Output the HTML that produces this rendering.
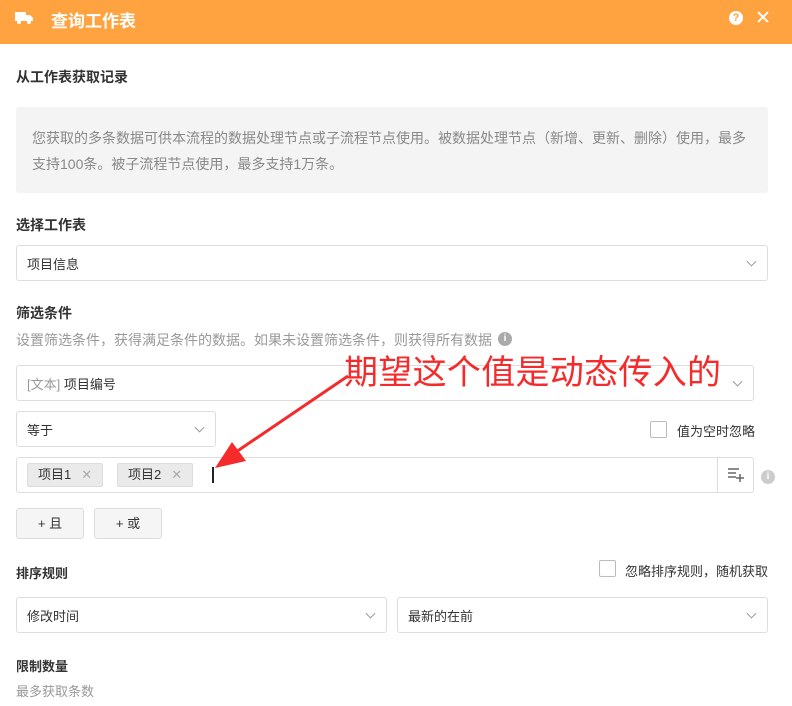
<!DOCTYPE html>
<html><head><meta charset="utf-8"><style>
*{box-sizing:border-box;margin:0;padding:0}
body{width:792px;height:706px;overflow:hidden;background:#fff;font-family:"Liberation Sans","Noto Sans CJK SC",sans-serif;color:#333;font-size:14px;position:relative}
.a{position:absolute;white-space:nowrap}
.hd{left:0;top:0;width:792px;height:44px;background:#ffa340}
.b{font-weight:bold;color:#333;font-size:14px}
.box{border:1px solid #ddd;border-radius:3px;background:#fff}
.chev{position:absolute;right:12px;top:50%;width:7px;height:7px;border-right:1px solid #999;border-bottom:1px solid #999;transform:translateY(-70%) rotate(45deg)}
.tag{background:#eaeaea;border:1px solid #ddd;border-radius:2px;height:24px;line-height:22px;padding:0 10px;font-size:13px;color:#333}
.tag span{color:#aaa;margin-left:10px}
.btn{border:1px solid #ddd;border-radius:3px;background:#f5f5f5;height:31px;line-height:29px;text-align:center;font-size:13px}
.cb{width:17px;height:17px;border:1px solid #bbb;border-radius:2px;background:#fff}
.g{color:#999}
</style></head><body>
<div class="a hd"></div>
<svg class="a" style="left:14px;top:10px" width="20" height="16" viewBox="0 0 20 16"><rect x="1" y="2" width="11" height="9" fill="#fff"/><path d="M12 5h4l3 3v3h-7z" fill="#fff"/><circle cx="5" cy="12" r="2" fill="#fff"/><circle cx="15" cy="12" r="2" fill="#fff"/></svg>
<div class="a" style="left:51px;top:7px;color:#fff;font-weight:bold;font-size:17px">查询工作表</div>
<div class="a" style="left:729px;top:11px;width:14px;height:14px;border-radius:50%;background:#fff;color:#ffa340;font-size:11px;font-weight:bold;text-align:center;line-height:14px">?</div>
<div class="a" style="left:755px;top:7px;color:#fff;font-size:19px">✕</div>

<div class="a b" style="left:16px;top:67px">从工作表获取记录</div>
<div class="a" style="left:16px;top:107px;width:752px;height:86px;background:#f4f4f4;border-radius:3px;padding:18px 12px 0 16px;color:#888;font-size:14px;line-height:26px;white-space:normal">您获取的多条数据可供本流程的数据处理节点或子流程节点使用。被数据处理节点（新增、更新、删除）使用，最多支持100条。被子流程节点使用，最多支持1万条。</div>

<div class="a b" style="left:16px;top:215px">选择工作表</div>
<div class="a box" style="left:16px;top:245px;width:752px;height:36px;padding:8px 10px;font-size:13px">项目信息<i class="chev"></i></div>

<div class="a b" style="left:16px;top:303px">筛选条件</div>
<div class="a g" style="left:16px;top:330px">设置筛选条件，获得满足条件的数据。如果未设置筛选条件，则获得所有数据</div>
<div class="a" style="left:498px;top:332px;width:14px;height:14px;border-radius:50%;background:#aaa;color:#fff;font-size:10px;text-align:center;line-height:14px;font-weight:bold">i</div>

<div class="a box" style="left:16px;top:365px;width:738px;height:36px;padding:8px 10px;font-size:13px"><span class="g">[文本]</span> 项目编号<i class="chev"></i></div>
<div class="a box" style="left:16px;top:411px;width:200px;height:36px;padding:8px 10px;font-size:13px">等于<i class="chev"></i></div>
<div class="a cb" style="left:650px;top:421px"></div>
<div class="a" style="left:677px;top:421px;font-size:13px">值为空时忽略</div>

<div class="a box" style="left:16px;top:457px;width:738px;height:36px"></div>
<div class="a" style="left:717px;top:458px;width:1px;height:34px;background:#ddd"></div>
<div class="a tag" style="left:27px;top:463px">项目1<span>✕</span></div>
<div class="a tag" style="left:117px;top:463px">项目2<span>✕</span></div>
<div class="a" style="left:212px;top:467px;width:2px;height:16px;background:#222"></div>
<svg class="a" style="left:727px;top:466px" width="17" height="16" viewBox="0 0 17 16"><path d="M1 3h11M1 7h8M1 11h8M13 8v8M9 12h8" stroke="#666" stroke-width="1.5" fill="none"/></svg>
<div class="a" style="left:761px;top:470px;width:14px;height:14px;border-radius:50%;background:#ccc;color:#fff;font-size:10px;text-align:center;line-height:14px;font-weight:bold">i</div>

<div class="a btn" style="left:16px;top:508px;width:68px">+ 且</div>
<div class="a btn" style="left:94px;top:508px;width:68px">+ 或</div>

<div class="a b" style="left:16px;top:563px;font-size:13px">排序规则</div>
<div class="a cb" style="left:599px;top:560px"></div>
<div class="a" style="left:625px;top:561px;font-size:13px">忽略排序规则，随机获取</div>
<div class="a box" style="left:16px;top:597px;width:371px;height:36px;padding:8px 10px;font-size:13px">修改时间<i class="chev"></i></div>
<div class="a box" style="left:397px;top:597px;width:371px;height:36px;padding:8px 10px;font-size:13px">最新的在前<i class="chev"></i></div>

<div class="a b" style="left:16px;top:656px;font-size:13px">限制数量</div>
<div class="a g" style="left:16px;top:681px;font-size:13px">最多获取条数</div>

<div class="a" style="left:344px;top:345px;color:#f52a2a;font-size:34px;white-space:nowrap;letter-spacing:0.3px">期望这个值是动态传入的</div>
<svg class="a" style="left:0;top:0" width="792" height="706"><path d="M348 376 L236 452" stroke="#f52a2a" stroke-width="3"/><path d="M215 468 L232 442 L246 461 Z" fill="#f52a2a"/></svg>
</body></html>
